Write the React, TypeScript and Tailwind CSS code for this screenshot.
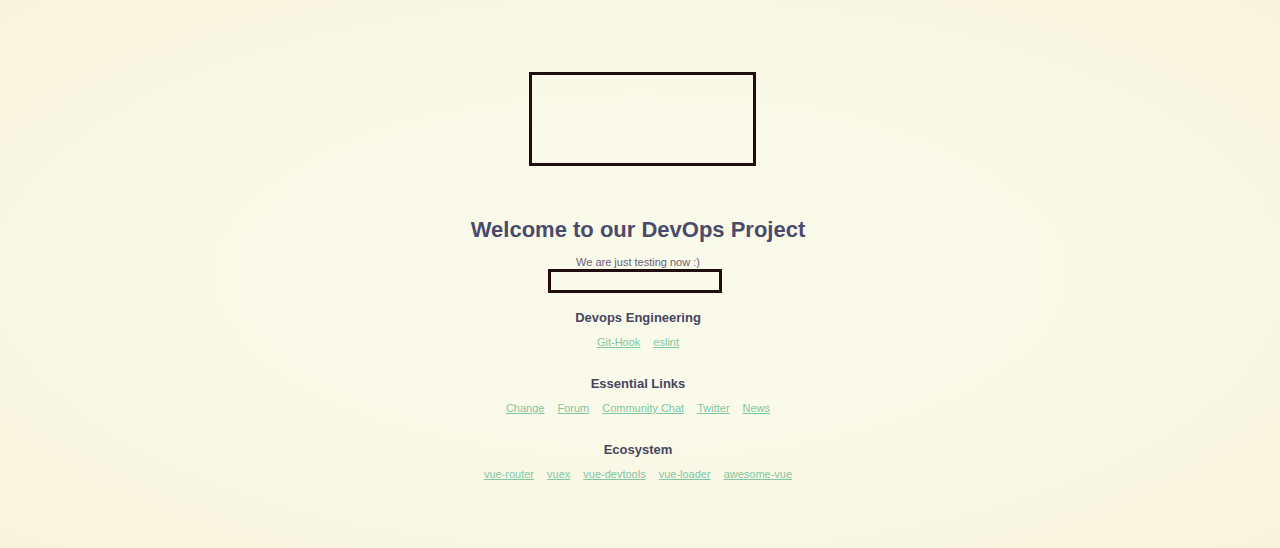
const groups = [
  { title: 'Devops Engineering', links: ['Git-Hook', 'eslint'] },
  { title: 'Essential Links', links: ['Change', 'Forum', 'Community Chat', 'Twitter', 'News'] },
  { title: 'Ecosystem', links: ['vue-router', 'vuex', 'vue-devtools', 'vue-loader', 'awesome-vue'] },
];

export default function App() {
  return (
    <div className="w-[1280px] h-[548px] overflow-hidden bg-[radial-gradient(ellipse_at_center,#fafaea_35%,#f8f5de_100%)] font-['Liberation_Sans',Arial,sans-serif]">
      <div className="flex flex-col items-center pt-[72px] pr-[4px]">
        {/* logo placeholder */}
        <div className="ml-[8px] w-[227px] h-[94px] border-[3px] border-[#200e0e]" />

        <h1 className="mt-[50px] text-[22px] leading-[28px] font-bold text-[#4a4a6b]">
          Welcome to our DevOps Project
        </h1>
        <p className="mt-[12px] text-[11px] leading-[13px] text-[#675f7c]">We are just testing now :)</p>
        <div className="mr-[7px] w-[174px] h-[24px] border-[3px] border-[#200e0e]" />

        {groups.map((g, i) => (
          <div key={g.title} className={`flex flex-col items-center ${i === 0 ? 'mt-[17px]' : 'mt-[27px]'}`}>
            <h3 className="text-[13px] leading-[16px] font-bold text-[#46465f]">{g.title}</h3>
            <ul className="mt-[10px] flex gap-[13px] text-[11px] leading-[13px]">
              {g.links.map((l) => (
                <li key={l}>
                  <a href="#" className="text-[#7fc6a1] underline">
                    {l}
                  </a>
                </li>
              ))}
            </ul>
          </div>
        ))}
      </div>
    </div>
  );
}
